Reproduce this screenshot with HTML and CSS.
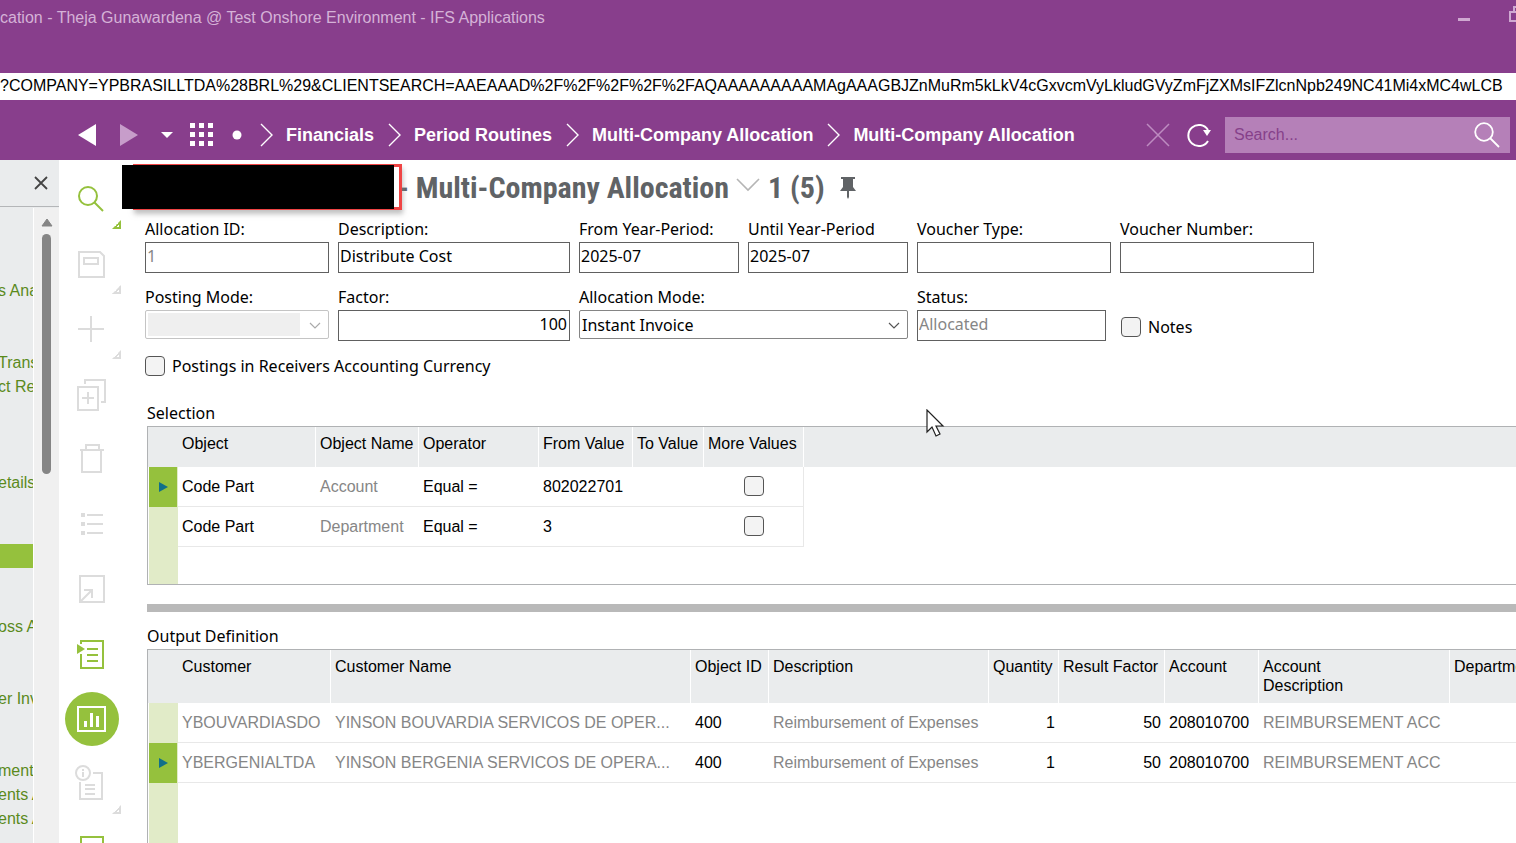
FILE: index.html
```html
<!DOCTYPE html>
<html lang="en">
<head>
<meta charset="utf-8">
<title>Multi-Company Allocation - IFS Applications</title>
<link rel="stylesheet" href="styles.css">
</head>
<body>
<header class="top">
  <div class="titlebar">
    <span class="caption">cation - Theja Gunawardena @ Test Onshore Environment - IFS Applications</span>
    <button class="win" aria-label="Minimize"><svg width="12" height="16"><path d="M0 12h12v3H0z" fill="#cfa8d1"/></svg></button>
    <button class="win restore" aria-label="Restore"><svg width="16" height="16"><path d="M5 5V1h10v9h-4M1 6h10v9H1z" fill="none" stroke="#cfa8d1" stroke-width="2"/></svg></button>
  </div>
  <input class="address" aria-label="Address" value="?COMPANY=YPBRASILLTDA%28BRL%29&amp;CLIENTSEARCH=AAEAAAD%2F%2F%2F%2F%2FAQAAAAAAAAAMAgAAAGBJZnMuRm5kLkV4cGxvcmVyLkludGVyZmFjZXMsIFZlcnNpb249NC41Mi4xMC4wLCB">
  <nav class="nav">
    <button class="back" aria-label="Back"><svg width="20" height="22"><path d="M0 11 18 0v22z" fill="#fff"/></svg></button>
    <button class="fwd" aria-label="Forward"><svg width="20" height="22"><path d="M18 11 0 0v22z" fill="#c79dca"/></svg></button>
    <button class="drop" aria-label="History"><svg width="12" height="22"><path d="M0 8h12l-6 6z" fill="#fff"/></svg></button>
    <button class="apps" aria-label="Navigator"><svg width="24" height="24" fill="#fff"><path d="M0 0h5v5H0zM9 0h5v5H9zM18 0h5v5h-5zM0 9h5v5H0zM9 9h5v5H9zM18 9h5v5h-5zM0 18h5v5H0zM9 18h5v5H9zM18 18h5v5h-5z"/></svg></button>
    <svg class="dot" width="10" height="10"><circle cx="5" cy="5" r="4.5" fill="#fff"/></svg>
    <ol class="crumbs">
      <li><svg width="13" height="24"><path d="m1 1 11 11L1 23" fill="none" stroke="#fff" stroke-width="1.4"/></svg><a href="#">Financials</a></li>
      <li><svg width="13" height="24"><path d="m1 1 11 11L1 23" fill="none" stroke="#fff" stroke-width="1.4"/></svg><a href="#">Period Routines</a></li>
      <li><svg width="13" height="24"><path d="m1 1 11 11L1 23" fill="none" stroke="#fff" stroke-width="1.4"/></svg><a href="#">Multi-Company Allocation</a></li>
      <li><svg width="13" height="24"><path d="m1 1 11 11L1 23" fill="none" stroke="#fff" stroke-width="1.4"/></svg><a href="#">Multi-Company Allocation</a></li>
    </ol>
    <button class="stop" aria-label="Stop"><svg width="24" height="24"><path d="m1 1 22 22M23 1 1 23" stroke="#bd8cc0" stroke-width="1.5"/></svg></button>
    <button class="reload" aria-label="Refresh"><svg width="26" height="26"><path d="M22 19A10.600 10.600 0 1 1 22 8" fill="none" stroke="#fff" stroke-width="2"/><path d="M17 8h8l-4 6z" fill="#fff"/></svg></button>
    <label class="search"><input type="text" placeholder="Search..." aria-label="Search"><svg width="26" height="26" fill="none" stroke="#fff" stroke-width="1.8"><circle cx="10" cy="10" r="8.800"/><path d="m16 16 9 9"/></svg></label>
  </nav>
</header>
<div class="body">
  <aside class="side">
    <div class="side-head"><button aria-label="Close"><svg width="14" height="14"><path d="m1 1 12 12M13 1 1 13" stroke="#444" stroke-width="1.800"/></svg></button></div>
    <div class="side-body">
      <ul class="tree">
        <li></li><li></li><li></li><li>s Ana</li><li></li><li></li><li>Trans</li><li>ct Re</li><li></li><li></li><li></li><li>etails</li><li></li><li></li><li class="on"></li><li></li><li></li><li>oss A</li><li></li><li></li><li>er Inv</li><li></li><li></li><li>ments</li><li>ents A</li><li>ents A</li>
      </ul>
      <div class="scroll"><svg width="12" height="9"><path d="M6 1 11 8H1z" fill="#858585" stroke="#858585" stroke-linejoin="round"/></svg><div class="thumb"></div></div>
    </div>
  </aside>
  <div class="tools">
    <button class="go more" aria-label="Search"><svg viewBox="0 0 30 32"><circle cx="11" cy="12" r="9"/><path d="m17 18 9 9"/></svg></button>
    <button class="more" aria-label="Save"><svg viewBox="0 0 30 32"><path d="M2 3h21l4 4v21H2zM7 9h14v6H7z"/></svg></button>
    <button class="more" aria-label="New"><svg viewBox="0 0 30 32"><path d="M14 2v26M1 15h26"/></svg></button>
    <button aria-label="Duplicate"><svg viewBox="0 0 30 32"><path d="M1 8h20v23H1zM11 13v12M5 19h12M8 5V1h20v22h-4"/></svg></button>
    <button aria-label="Delete"><svg viewBox="0 0 30 32"><path d="M3 6h24M5 6v22h19V6M9 6V1h13v5"/></svg></button>
    <button aria-label="List"><svg viewBox="0 0 30 32"><path d="M4 6h4M4 15h4M4 24h4" stroke-width="4"/><path d="M10 6h16M10 15h16M10 24h16"/></svg></button>
    <button aria-label="Open"><svg viewBox="0 0 30 32"><path d="M3 2h24v26H3zM4 27l11-11M7 16h8v8"/></svg></button>
    <button class="go" aria-label="Run"><svg viewBox="0 0 30 32"><path d="M4 5V2h22v27H4V15M10 10h11M10 16h11M10 22h11"/><path d="m0 5 8 5-8 5z" class="solid"/></svg></button>
    <button class="active" aria-label="Reports"><svg viewBox="0 0 30 32"><path d="M1 3h27v24H1z"/><path d="M7 17h3v6H7zM13 9h3v14h-3zM19 12h3v11h-3z" class="solid"/></svg></button>
    <button class="more" aria-label="Details"><svg viewBox="0 0 30 32"><circle cx="6" cy="4" r="7"/><path d="M6 3v5M6 0v2M16 4h9v26H3V13M8 16h10M8 20h10M8 25h10"/></svg></button>
    <button class="go" aria-label="Next"><svg viewBox="0 0 30 32"><path d="M4 3h22v26H4z"/></svg></button>
  </div>
  <main>
    <div class="heading">
      <div class="mask"></div>
      <h1>- Multi-Company Allocation</h1>
      <svg class="chev" width="24" height="14"><path d="m1 1 11 11L23 1" fill="none" stroke="#b5b5b5" stroke-width="1.600"/></svg>
      <span class="count">1 (5)</span>
      <svg class="pin" width="16" height="22"><path d="M1 0h14v2h-2v8l3 4H9v6l-1 2-1-2v-6H0l3-4V2H1z" fill="#606366"/></svg>
    </div>
    <form class="form">
      <label class="field">Allocation ID:<input class="dim" value="1"></label>
      <label class="field">Description:<input value="Distribute Cost"></label>
      <label class="field">From Year-Period:<input value="2025-07"></label>
      <label class="field">Until Year-Period<input value="2025-07"></label>
      <label class="field">Voucher Type:<input value=""></label>
      <label class="field">Voucher Number:<input value=""></label>
      <label class="field">Posting Mode:<span class="combo off"><select disabled></select><svg width="12" height="7"><path d="m1 1 5 5 5-5" fill="none" stroke="#aaa" stroke-width="1.200"/></svg></span></label>
      <label class="field">Factor:<input class="num" value="100"></label>
      <label class="field wide">Allocation Mode:<span class="combo"><select><option>Instant Invoice</option></select><svg width="12" height="7"><path d="m1 1 5 5 5-5" fill="none" stroke="#555" stroke-width="1.200"/></svg></span></label>
      <label class="field status">Status:<input class="dim" value="Allocated"></label>
      <label class="check notes"><input type="checkbox">Notes</label>
    </form>
    <label class="check currency"><input type="checkbox">Postings in Receivers Accounting Currency</label>
    <h2>Selection</h2>
    <div class="grid short">
      <table>
        <colgroup><col class="c-gut"><col class="c-obj"><col class="c-name"><col class="c-op"><col class="c-from"><col class="c-to"><col class="c-more"><col></colgroup>
        <thead><tr><th></th><th>Object</th><th>Object Name</th><th>Operator</th><th>From Value</th><th>To Value</th><th>More Values</th><th></th></tr></thead>
        <tbody>
          <tr class="cur"><td></td><td>Code Part</td><td class="dim">Account</td><td>Equal =</td><td>802022701</td><td></td><td class="mid end"><input type="checkbox" aria-label="More values, Account"></td><td class="none"></td></tr>
          <tr><td></td><td>Code Part</td><td class="dim">Department</td><td>Equal =</td><td>3</td><td></td><td class="mid end"><input type="checkbox" aria-label="More values, Department"></td><td class="none"></td></tr>
        </tbody>
      </table>
    </div>
    <div class="splitter"></div>
    <h2>Output Definition</h2>
    <div class="grid tall">
      <table>
        <colgroup><col class="c-gut"><col class="c-cust"><col class="c-cname"><col class="c-id"><col class="c-desc"><col class="c-qty"><col class="c-res"><col class="c-acc"><col class="c-adesc"><col></colgroup>
        <thead><tr><th></th><th>Customer</th><th>Customer Name</th><th>Object ID</th><th>Description</th><th>Quantity</th><th>Result Factor</th><th>Account</th><th>Account<br>Description</th><th>Department</th></tr></thead>
        <tbody>
          <tr><td></td><td class="dim">YBOUVARDIASDO</td><td class="dim">YINSON BOUVARDIA SERVICOS DE OPER...</td><td>400</td><td class="dim">Reimbursement of Expenses</td><td class="num">1</td><td class="num">50</td><td>208010700</td><td class="dim">REIMBURSEMENT ACC</td><td></td></tr>
          <tr class="cur"><td></td><td class="dim">YBERGENIALTDA</td><td class="dim">YINSON BERGENIA SERVICOS DE OPERA...</td><td>400</td><td class="dim">Reimbursement of Expenses</td><td class="num">1</td><td class="num">50</td><td>208010700</td><td class="dim">REIMBURSEMENT ACC</td><td></td></tr>
        </tbody>
      </table>
    </div>
  </main>
</div>
<svg class="pointer" width="20" height="30"><path d="M1 1v22l5-5 4 9 4-2-4-8h7z" fill="#fff" stroke="#222" stroke-width="1.200"/></svg>
</body>
</html>
```

FILE: styles.css
```css
* { box-sizing: border-box; }
body {
  margin: 0;
  height: 100vh;
  display: flex;
  flex-direction: column;
  overflow: hidden;
  background: #fff;
  color: #000;
  font: 16px/20px "Liberation Sans", Arial, sans-serif;
}
svg { display: block; flex: none; }
button { border: 0; padding: 0; background: none; font: inherit; flex: none; }
input, select { font: inherit; color: inherit; border-radius: 0; margin: 0; }

.top { background: #883e8c; flex: none; }
.titlebar { display: flex; align-items: flex-start; height: 73px; padding-top: 8px; color: #d5b2d7; overflow: hidden; }
.caption { flex: 1; white-space: nowrap; }
.win { margin-right: 39px; margin-top: -2px; }
.restore { margin-right: -9px; }
.address { display: block; width: 100%; height: 27px; border: 0; padding: 0 0 2px; background: #fff; }

.nav { display: flex; align-items: center; height: 60px; padding: 10px 6px 0 78px; }
.fwd { margin-left: 22px; }
.drop { margin-left: 21px; }
.apps { margin-left: 17px; }
.dot { margin-left: 18px; }
.crumbs { display: flex; flex: 1; list-style: none; margin: 0 0 0 18px; padding: 0; gap: 14px; }
.crumbs li { display: flex; align-items: center; gap: 13px; white-space: nowrap; }
.crumbs a { color: #fff; font-weight: bold; font-size: 18px; text-decoration: none; }
.reload { margin-left: 16px; }
.search { display: flex; align-items: center; width: 285px; height: 36px; margin-left: 13px; padding: 0 10px 0 9px; background: #b580b8; }
.search input { flex: 1; min-width: 0; border: 0; padding: 0; background: none; }
.search input::placeholder { color: #86408a; opacity: 1; }

.body { flex: 1; min-height: 0; display: flex; }
.side { width: 59px; flex: none; display: flex; flex-direction: column; background: #eaeced; overflow: hidden; }
.side-head { height: 47px; flex: none; display: flex; justify-content: flex-end; align-items: center; padding-right: 11px; border-bottom: 1px solid #b4b6b8; }
.side-body { flex: 1; min-height: 0; display: flex; padding-top: 1px; }
.tree { flex: 1; min-width: 0; list-style: none; margin: 0; padding: 0; color: #5a8a1c; overflow: hidden; }
.tree li { height: 24px; margin-left: -2px; line-height: 22px; white-space: nowrap; }
.tree .on { background: #95c13d; }
.scroll { width: 26px; flex: none; display: flex; flex-direction: column; align-items: center; gap: 7px; padding-top: 10px; background: #f0f0f0; border-left: 1px solid #fff; }
.thumb { width: 9px; height: 240px; border-radius: 5px; background: #858585; }

.tools { width: 63px; flex: none; padding-top: 6px; overflow: hidden; color: #dcdcdc; }
.tools button { display: flex; align-items: flex-start; position: relative; width: 63px; height: 65px; padding: 18px 0 0 18px; color: #dcdcdc; }
.tools svg { position: relative; width: 30px; height: 32px; overflow: visible; fill: none; stroke: currentColor; stroke-width: 2; }
.tools svg .solid { fill: currentColor; stroke: none; }
.tools .go { color: #95c13d; }
.tools .active { color: #fff; }
.tools .active::before { content: ""; position: absolute; left: 6px; top: 6px; width: 54px; height: 54px; border-radius: 50%; background: #95c13d; }
.more::after { content: ""; position: absolute; right: 1px; top: 54px; width: 9px; height: 9px; background: linear-gradient(currentColor 0 0) right / 2px 100% no-repeat, linear-gradient(currentColor 0 0) bottom / 100% 2px no-repeat, linear-gradient(135deg, transparent 50%, currentColor 50% 64%, transparent 64%); clip-path: polygon(100% 0, 100% 100%, 0 100%); }

main { flex: 1; min-width: 0; display: flex; flex-direction: column; padding-left: 22px; }
.heading { display: flex; align-items: center; height: 56px; flex: none; margin-left: -22px; font-family: "Liberation Sans Narrow", "Roboto Condensed", "Open Sans Condensed", "DejaVu Sans Condensed", sans-serif; font-weight: bold; font-size: 30px; line-height: 36px; color: #606366; white-space: nowrap; }
.mask { position: relative; width: 269px; height: 46px; margin: 0 -4px 2px 11px; border: 3px solid #ef4444; box-shadow: 1px 4px 5px #8888; z-index: 1; }
.mask::before { content: ""; position: absolute; left: -14px; top: -2px; width: 272px; height: 44px; background: #000; }
h1 { margin: 0; font: inherit; }
.chev { margin: 0 8px 6px 7px; }
.pin { margin-left: 15px; }

.form { display: grid; grid-template-columns: 184px 232px 160px 160px 194px 194px; gap: 6px 9px; padding: 3px 0 0 1px; flex: none; }
.field, .check, h2 { font: 16px/20px "Noto Sans", "DejaVu Sans Condensed", sans-serif; }
.field { display: flex; flex-direction: column; gap: 3px; height: 62px; }
.field input { width: 100%; height: 31px; padding: 0 2px 4px 1px; border: 1px solid #606060; background: #fff; }
.dim, .field .dim { color: #868686; }
.wide { grid-column: span 2; }
.status input { width: 189px; }
.combo { position: relative; display: block; height: 29px; border: 1px solid #858585; border-radius: 2px; }
.combo select { appearance: none; width: 100%; height: 27px; border: 0; padding: 0 24px 0 2px; background: none; opacity: 1; }
.combo svg { position: absolute; right: 7px; top: 11px; }
.combo.off { border-color: #c4c4c4; padding: 2px 28px 2px 2px; }
.combo.off select { height: 23px; display: block; background: #efefef; }
.num, .field .num { text-align: right; }
.check { display: flex; align-items: center; gap: 7px; }
input[type="checkbox"] { appearance: none; width: 20px; height: 20px; border: 1px solid #555; border-radius: 4px; background: #f3f3f3; }
.notes { align-self: end; height: 30px; margin-bottom: 7px; padding-left: 1px; }
.currency { margin-top: 7px; padding-left: 1px; flex: none; }

h2 { margin: 0; padding-left: 3px; }
.currency + h2 { margin-top: 27px; }
.grid { margin: 3px 0 0 3px; border: solid #b0b2b4; border-width: 1px 0 1px 1px; background: linear-gradient(#e1ebc8 0 0) 1px 0 / 29px 100% no-repeat; overflow: hidden; }
.short { height: 159px; flex: none; }
.tall { flex: 1; min-height: 0; border-bottom: 0; }
table { width: 100%; table-layout: fixed; border-collapse: separate; border-spacing: 0; }
th, td { padding: 0 4px; text-align: left; white-space: nowrap; overflow: hidden; font-weight: normal; }
th { background: #eaeced; border-right: 1px solid #fff; vertical-align: top; height: 40px; padding: 7px 0 0 4px; line-height: 19px; }
th:first-child { border-right-color: #eaeced; }
th:last-child { border-right: 0; }
.tall th { height: 53px; }
td { height: 40px; border-bottom: 1px solid #e8e8e8; }
td:first-child { border: 0; }
.cur td:first-child { background: #95c13d content-box; position: relative; padding: 0 1px; }
.cur td:first-child::before { content: ""; position: absolute; left: 11px; top: 15px; border: solid transparent; border-width: 5px 0 5px 9px; border-left-color: #11708a; }
td.mid { padding-bottom: 2px; }
td.mid input { display: block; margin: auto; }
td.end { border-right: 1px solid #e8e8e8; }
td.none { border: 0; }
.c-gut { width: 30px; } .c-obj { width: 138px; } .c-name { width: 103px; } .c-op { width: 120px; }
.c-from { width: 94px; } .c-to { width: 71px; } .c-more { width: 100px; }
.c-cust { width: 153px; } .c-cname { width: 360px; } .c-id { width: 78px; } .c-desc { width: 220px; }
.c-qty { width: 70px; } .c-res { width: 106px; } .c-acc { width: 94px; } .c-adesc { width: 191px; }
.splitter { height: 8px; flex: none; margin: 19px 0 14px 3px; background: #b9b9b9; }
.pointer { position: absolute; left: 926px; top: 409px; }
```
